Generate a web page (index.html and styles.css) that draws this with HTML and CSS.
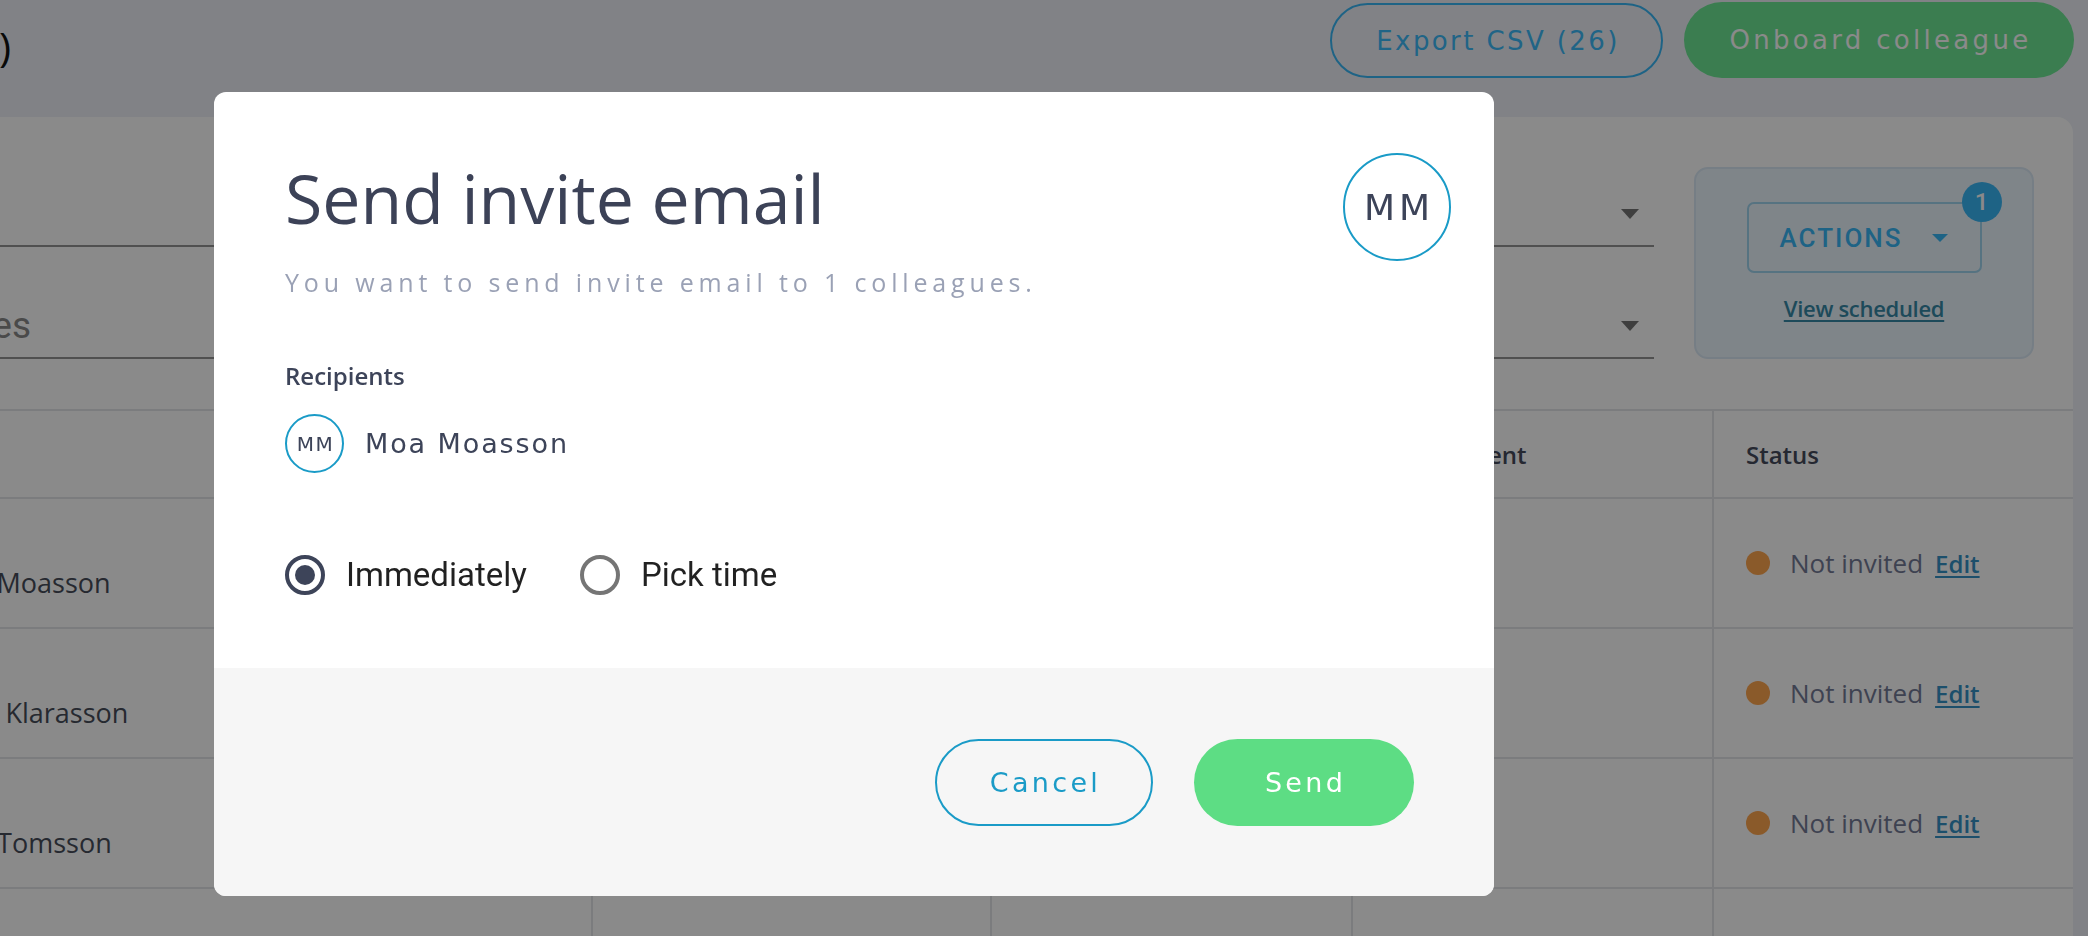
FILE: index.html
```html
<!DOCTYPE html>
<html lang="en">
<head>
<meta charset="utf-8">
<title>Colleagues</title>
<link rel="stylesheet" href="styles.css">
</head>
<body>
<div class="page">
  <header class="topbar">
    <h1 class="page-title">Colleagues (26)</h1>
    <div class="top-actions">
      <button class="btn-export">Export CSV (26)</button>
      <button class="btn-onboard">Onboard colleague</button>
    </div>
  </header>

  <section class="card">
    <div class="filters">
      <div class="fields">
        <div class="field"><span class="field-label">Search</span><span class="caret"></span></div>
        <div class="field"><span class="field-label">Categories</span><span class="caret"></span></div>
      </div>
      <div class="actions-box">
        <div class="actions-btn">
          <span>ACTIONS</span><span class="caret-sm"></span>
          <span class="badge">1</span>
        </div>
        <a class="view-scheduled">View scheduled</a>
      </div>
    </div>

    <div class="table">
      <div class="row head">
        <div class="cell c-name"></div>
        <div class="cell">Email</div>
        <div class="cell">Role</div>
        <div class="cell">Department</div>
        <div class="cell">Status</div>
      </div>
      <div class="row">
        <div class="cell c-name">Moa Moasson</div>
        <div class="cell"></div>
        <div class="cell"></div>
        <div class="cell"></div>
        <div class="cell c-status"><span class="dot"></span><span class="status-text">Not invited</span><a class="edit">Edit</a></div>
      </div>
      <div class="row">
        <div class="cell c-name">Klara Klarasson</div>
        <div class="cell"></div>
        <div class="cell"></div>
        <div class="cell"></div>
        <div class="cell c-status"><span class="dot"></span><span class="status-text">Not invited</span><a class="edit">Edit</a></div>
      </div>
      <div class="row">
        <div class="cell c-name">Tom Tomsson</div>
        <div class="cell"></div>
        <div class="cell"></div>
        <div class="cell"></div>
        <div class="cell c-status"><span class="dot"></span><span class="status-text">Not invited</span><a class="edit">Edit</a></div>
      </div>
      <div class="row">
        <div class="cell c-name"></div>
        <div class="cell"></div>
        <div class="cell"></div>
        <div class="cell"></div>
        <div class="cell"></div>
      </div>
    </div>
  </section>
</div>

<div class="overlay">
  <div class="modal">
    <div class="modal-body">
      <div class="modal-head">
        <div class="title-block">
          <h2 class="modal-title">Send invite email</h2>
          <p class="modal-sub">You want to send invite email to 1 colleagues.</p>
        </div>
        <div class="avatar-lg">MM</div>
      </div>
      <div class="recipients-label">Recipients</div>
      <div class="recipient">
        <div class="avatar-sm">MM</div>
        <span class="recipient-name">Moa Moasson</span>
      </div>
      <div class="timing">
        <label class="radio-opt">
          <span class="radio checked"><span class="radio-dot"></span></span>
          <span class="radio-label">Immediately</span>
        </label>
        <label class="radio-opt">
          <span class="radio"></span>
          <span class="radio-label">Pick time</span>
        </label>
      </div>
    </div>
    <div class="modal-footer">
      <button class="btn-cancel">Cancel</button>
      <button class="btn-send">Send</button>
    </div>
  </div>
</div>
</body>
</html>
```

FILE: styles.css
```css
* { box-sizing: border-box; }

html, body {
  margin: 0;
  padding: 0;
}

body {
  width: 2088px;
  height: 936px;
  overflow: hidden;
  background: #eef1f8;
  font-family: "Open Sans", "Noto Sans", sans-serif;
  position: relative;
}

button {
  border: none;
  background: none;
  padding: 0;
  margin: 0;
  cursor: pointer;
}

/* ---------- page behind the modal ---------- */
.page {
  width: 2088px;
  height: 936px;
  overflow: hidden;
}

.topbar {
  height: 117px;
  display: flex;
  justify-content: space-between;
  align-items: flex-start;
  padding-right: 14px;
}

.page-title {
  margin: 18px 0 0 -300px;
  width: 311px;
  text-align: right;
  white-space: nowrap;
  font-size: 41px;
  line-height: 56px;
  font-weight: 400;
  color: #111;
}

.top-actions {
  display: flex;
  gap: 21px;
  margin-top: 2px;
}

.btn-export {
  width: 333px;
  height: 75px;
  margin-top: 1px;
  border: 2px solid #39b7f6;
  border-radius: 40px;
  color: #3cb9f8;
  font-family: "DejaVu Sans", sans-serif;
  font-size: 26px;
  letter-spacing: 2.4px;
  padding-left: 3px;
}

.btn-onboard {
  width: 390px;
  height: 76px;
  border-radius: 40px;
  background: #6de794;
  color: #fff;
  font-family: "DejaVu Sans", sans-serif;
  font-size: 26px;
  letter-spacing: 3.3px;
  padding-left: 3px;
}

.card {
  margin-left: -200px;
  width: 2273px;
  background: #fff;
  border-radius: 16px 16px 0 0;
  height: 830px;
}

.filters {
  display: grid;
  grid-template-columns: 1fr 340px;
  column-gap: 40px;
  padding: 50px 39px 50px 33px;
}

.fields {
  display: flex;
  flex-direction: column;
  gap: 32px;
}

.field {
  height: 80px;
  display: flex;
  justify-content: space-between;
  align-items: center;
  padding-top: 16px;
  border-bottom: 2px solid #949494;
}

.field-label {
  font-family: Roboto, sans-serif;
  font-size: 37px;
  line-height: 48px;
  color: #8a8a8a;
  margin-left: 20px;
}

.caret {
  width: 0;
  height: 0;
  margin-right: 15px;
  border-left: 9px solid transparent;
  border-right: 9px solid transparent;
  border-top: 10px solid #757575;
}

.actions-box {
  height: 192px;
  background: #ebf5fe;
  border: 2px solid #dbe9f5;
  border-radius: 14px;
  display: flex;
  flex-direction: column;
  align-items: center;
  padding-top: 33px;
}

.actions-btn {
  position: relative;
  width: 235px;
  height: 71px;
  border: 2px solid #9fd4ee;
  border-radius: 7px;
  display: flex;
  align-items: center;
  justify-content: center;
  gap: 30px;
  font-family: Roboto, sans-serif;
  font-weight: 500;
  font-size: 26px;
  letter-spacing: 2px;
  color: #39b7f6;
}

.caret-sm {
  width: 0;
  height: 0;
  border-left: 8px solid transparent;
  border-right: 8px solid transparent;
  border-top: 8px solid #39b7f6;
}

.badge {
  position: absolute;
  right: -22px;
  top: -22px;
  width: 40px;
  height: 40px;
  border-radius: 50%;
  background: #39b7f6;
  color: #fff;
  display: flex;
  align-items: center;
  justify-content: center;
  font-size: 24px;
  letter-spacing: 0;
  font-weight: 500;
}

.view-scheduled {
  margin-top: 20px;
  font-size: 22px;
  line-height: 30px;
  font-weight: 600;
  color: #3689a7;
  text-decoration: underline;
  text-underline-offset: 3px;
  letter-spacing: -0.3px;
}

.table {
  display: flex;
  flex-direction: column;
}

.row {
  display: grid;
  grid-template-columns: 793px 399px 361px 361px 359px;
  height: 130px;
  border-top: 2px solid #e4e6e9;
}

.row.head {
  height: 88px;
}

.cell {
  border-right: 2px solid #e4e6e9;
  padding-left: 32px;
  display: flex;
  align-items: center;
  font-size: 26px;
  color: #464c59;
}

.cell:last-child {
  border-right: none;
}

.head .cell {
  font-size: 24px;
  font-weight: 600;
  color: #454b5c;
}

.c-name {
  padding-left: 134px;
  padding-top: 38px;
  font-size: 27px;
}

.head .c-name {
  padding-top: 0;
}

.dot {
  width: 24px;
  height: 24px;
  border-radius: 50%;
  background: #ffa64f;
  margin-right: 20px;
  flex-shrink: 0;
}

.status-text {
  font-size: 26px;
  color: #737a96;
  margin-right: 12px;
}

.edit {
  font-size: 24px;
  font-weight: 600;
  color: #3492c6;
  text-decoration: underline;
  text-underline-offset: 3px;
}

/* ---------- overlay + modal ---------- */
.overlay {
  position: fixed;
  inset: 0;
  background: rgba(0, 0, 0, 0.46);
}

.modal {
  position: absolute;
  left: 214px;
  top: 92px;
  width: 1280px;
  height: 804px;
  background: #fff;
  border-radius: 12px;
  overflow: hidden;
  display: flex;
  flex-direction: column;
}

.modal-body {
  flex: 1;
  padding: 61px 43px 0 71px;
}

.modal-head {
  display: flex;
  justify-content: space-between;
  align-items: flex-start;
}

.title-block {
  margin-top: 5px;
}

.modal-title {
  margin: 0;
  font-size: 68px;
  line-height: 80px;
  font-weight: 400;
  color: #3c4257;
  letter-spacing: 0;
}

.modal-sub {
  margin: 28px 0 0;
  font-size: 25px;
  line-height: 32px;
  letter-spacing: 4.85px;
  color: #9aa1b5;
}

.avatar-lg {
  width: 108px;
  height: 108px;
  flex-shrink: 0;
  border: 2px solid #1a9bc7;
  border-radius: 50%;
  display: flex;
  align-items: center;
  justify-content: center;
  font-family: "DejaVu Sans", sans-serif;
  font-size: 36px;
  letter-spacing: 4px;
  padding-left: 4px;
  color: #3d4459;
}

.recipients-label {
  margin-top: 62px;
  font-size: 24px;
  line-height: 32px;
  font-weight: 600;
  color: #3d4459;
}

.recipient {
  margin-top: 22px;
  display: flex;
  align-items: center;
  gap: 21px;
}

.avatar-sm {
  width: 59px;
  height: 59px;
  border: 2px solid #1a9bc7;
  border-radius: 50%;
  display: flex;
  align-items: center;
  justify-content: center;
  font-family: "DejaVu Sans", sans-serif;
  font-size: 20px;
  letter-spacing: 1.5px;
  padding-left: 2px;
  color: #3d4459;
}

.recipient-name {
  font-family: "DejaVu Sans", sans-serif;
  font-size: 27px;
  letter-spacing: 1.9px;
  color: #3d4459;
}

.timing {
  margin-top: 82px;
  display: flex;
  align-items: center;
  gap: 53px;
}

.radio-opt {
  display: flex;
  align-items: center;
  gap: 21px;
}

.radio {
  width: 40px;
  height: 40px;
  border-radius: 50%;
  border: 4px solid #757575;
  display: flex;
  align-items: center;
  justify-content: center;
}

.radio.checked {
  border-color: #3d4459;
}

.radio-dot {
  width: 20px;
  height: 20px;
  border-radius: 50%;
  background: #3d4459;
}

.radio-label {
  font-family: Roboto, sans-serif;
  font-size: 33px;
  line-height: 40px;
  color: rgba(0, 0, 0, 0.87);
}

.modal-footer {
  height: 228px;
  background: #f6f6f6;
  display: flex;
  justify-content: flex-end;
  align-items: center;
  gap: 41px;
  padding-right: 80px;
}

.btn-cancel {
  width: 218px;
  height: 87px;
  border: 2px solid #1a9bc7;
  border-radius: 44px;
  color: #1a9bc7;
  font-family: "DejaVu Sans", sans-serif;
  font-size: 27px;
  letter-spacing: 3.3px;
  padding-left: 3px;
}

.btn-send {
  width: 220px;
  height: 87px;
  border-radius: 44px;
  background: #5ddd84;
  color: #fff;
  font-family: "DejaVu Sans", sans-serif;
  font-size: 27px;
  letter-spacing: 3.3px;
  padding-left: 3px;
}
```
